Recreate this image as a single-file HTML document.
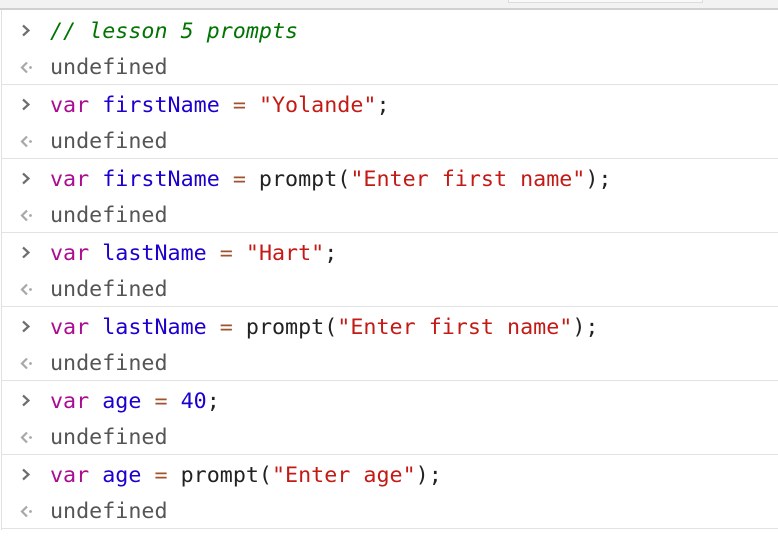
<!DOCTYPE html>
<html><head><style>
body{margin:0;width:778px;height:530px;background:#fff;overflow:hidden;position:relative;font-family:"DejaVu Sans Mono","Liberation Mono",monospace;font-size:21.7px;}
.top{position:absolute;left:0;top:0;width:778px;height:8px;background:#f2f2f2;border-bottom:2px solid #d0d0d0;}
.box{position:absolute;left:508px;top:-2px;width:193px;height:3px;border:1px solid #dcdcdc;background:#f8f8f8;}
.lb{position:absolute;left:1px;top:10px;width:1px;height:520px;background:#e0e0e0;}
.l{position:absolute;left:50px;height:37px;line-height:37px;white-space:pre;color:#222;}
.r{color:#555;}
.sep{position:absolute;left:2px;right:0;height:1px;background:#e2e2e2;}
.gt,.lt{position:absolute;left:16px;width:20px;height:37px;}
.c{color:#007400;font-style:italic}.k{color:#aa0d91}.v{color:#1c00cf}.o{color:#a0522d}.s{color:#c41a16}
</style></head><body>
<div class="top"></div><div class="box"></div><div class="lb"></div>
<div id="w"></div>
<script>
var cmds=[
'<span class="c">// lesson 5 prompts</span>',
'<span class="k">var</span> <span class="v">firstName</span> <span class="o">=</span> <span class="s">"Yolande"</span>;',
'<span class="k">var</span> <span class="v">firstName</span> <span class="o">=</span> prompt(<span class="s">"Enter first name"</span>);',
'<span class="k">var</span> <span class="v">lastName</span> <span class="o">=</span> <span class="s">"Hart"</span>;',
'<span class="k">var</span> <span class="v">lastName</span> <span class="o">=</span> prompt(<span class="s">"Enter first name"</span>);',
'<span class="k">var</span> <span class="v">age</span> <span class="o">=</span> <span class="v">40</span>;',
'<span class="k">var</span> <span class="v">age</span> <span class="o">=</span> prompt(<span class="s">"Enter age"</span>);'];
var h='';
var gt='<svg width="20" height="37" viewBox="0 0 20 37"><path d="M7 13.5 L12.5 18.5 L7 23.5" fill="none" stroke="#6e6e6e" stroke-width="2.2"/></svg>';
var lt='<svg width="20" height="37" viewBox="0 0 20 37"><path d="M11 13.5 L6 18.5 L11 23.5" fill="none" stroke="#a8a8a8" stroke-width="2.2"/><circle cx="14.5" cy="18.5" r="1.4" fill="#a8a8a8"/></svg>';
for(var i=0;i<7;i++){
var t=12+74*i;
h+='<div class="gt" style="top:'+t+'px">'+gt+'</div>';
h+='<div class="l" style="top:'+(t+1)+'px">'+cmds[i]+'</div>';
h+='<div class="sep" style="top:'+(t-2)+'px;'+(i==0?'display:none':'')+'"></div>';
h+='<div class="lt" style="top:'+(t+37)+'px">'+lt+'</div>';
h+='<div class="l r" style="top:'+(t+37)+'px">undefined</div>';
}
h+='<div class="sep" style="top:528px"></div>';
document.getElementById('w').innerHTML=h;
</script>
</body></html>
